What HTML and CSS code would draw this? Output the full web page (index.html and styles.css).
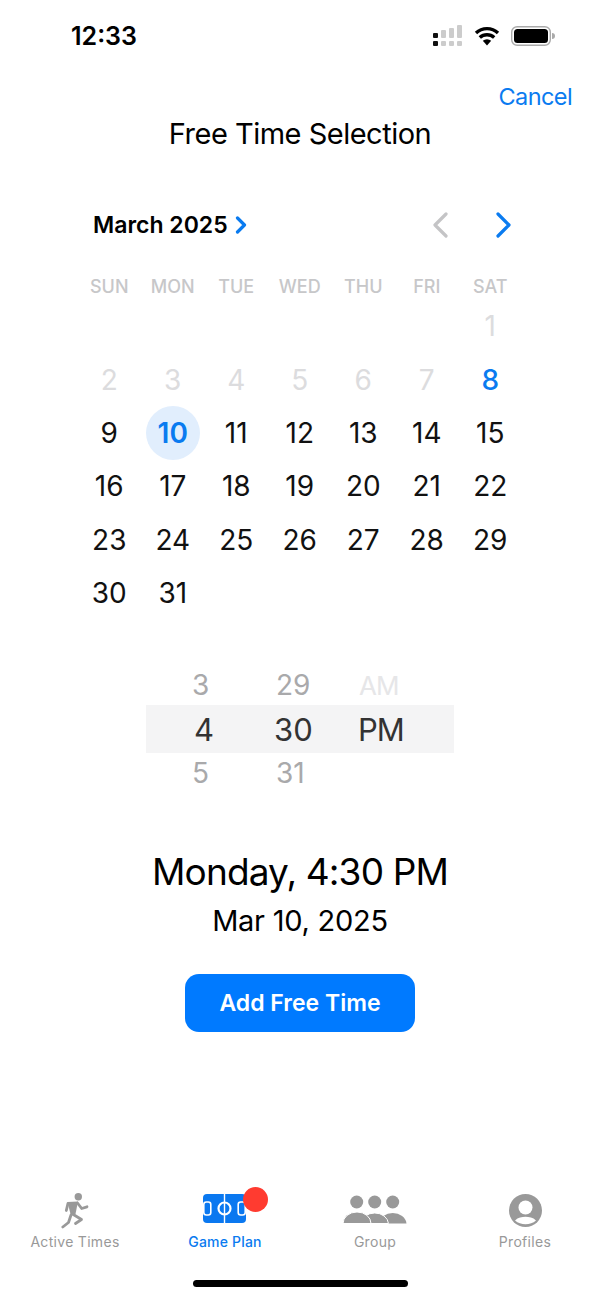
FILE: index.html
```html
<!DOCTYPE html>
<html>
    <head>
        <title>Free Time Selection</title>
        <link rel="stylesheet" href="styles.css">
    </head>
    <body>
        <div class="phone">
            <div class="statusBar">
                <span class="clock">12:33</span>
                <div class="statusIcons">
                    <svg class="signal" width="32" height="22" viewBox="0 0 32 22">
                        <rect x="0" y="8" width="5" height="5" rx="1" fill="#111"/>
                        <rect x="0" y="16" width="5" height="5" rx="1" fill="#111"/>
                        <rect x="8" y="5" width="5" height="8" rx="1" fill="#ccc"/>
                        <rect x="8" y="16" width="5" height="5" rx="1" fill="#ccc"/>
                        <rect x="16" y="3" width="5" height="10" rx="1" fill="#ccc"/>
                        <rect x="16" y="16" width="5" height="5" rx="1" fill="#ccc"/>
                        <rect x="24" y="0" width="5" height="13" rx="1" fill="#ccc"/>
                        <rect x="24" y="16" width="5" height="5" rx="1" fill="#ccc"/>
                    </svg>
                    <svg width="26" height="20" viewBox="0 0 26 20">
                        <path d="M13 19.500 L8.800 14.800 A6.200 6.200 0 0 1 17.200 14.800 Z" fill="#000"/>
                        <path d="M5.800 11.600 A10.600 10.600 0 0 1 20.200 11.600" fill="none" stroke="#000" stroke-width="3.400"/>
                        <path d="M2 7 A16 16 0 0 1 24 7" fill="none" stroke="#000" stroke-width="3.400"/>
                    </svg>
                    <svg width="44" height="20" viewBox="0 0 44 20">
                        <rect x="0.700" y="0.700" width="38.600" height="18.600" rx="5.500" fill="none" stroke="#aaa" stroke-width="1.400"/>
                        <rect x="3" y="3" width="34" height="14" rx="3.500" fill="#000"/>
                        <path d="M41 7 A3 3 0 0 1 41 13 Z" fill="#aaa"/>
                    </svg>
                </div>
            </div>

            <div class="cancelRow"><span class="cancel">Cancel</span></div>
            <h1 class="title">Free Time Selection</h1>

            <div class="calendar">
                <div class="calHeader">
                    <div class="monthLabel">
                        <span>March 2025</span>
                        <svg width="12" height="18" viewBox="0 0 12 18"><path d="M2.500 2 L9.500 9 L2.500 16" class="chev blueChev"/></svg>
                    </div>
                    <div class="monthNav">
                        <svg width="18" height="26" viewBox="0 0 18 26"><path d="M15 2 L4 13 L15 24" class="chev greyChev"/></svg>
                        <svg width="18" height="26" viewBox="0 0 18 26"><path d="M3 2 L14 13 L3 24" class="chev blueChev"/></svg>
                    </div>
                </div>
                <div class="weekdays">
                    <span>SUN</span><span>MON</span><span>TUE</span><span>WED</span><span>THU</span><span>FRI</span><span>SAT</span>
                </div>
                <div class="days">
                    <span></span><span></span><span></span><span></span><span></span><span></span><span class="off">1</span>
                    <span class="off">2</span><span class="off">3</span><span class="off">4</span><span class="off">5</span><span class="off">6</span><span class="off">7</span><span class="today">8</span>
                    <span>9</span><span><b class="selected">10</b></span><span>11</span><span>12</span><span>13</span><span>14</span><span>15</span>
                    <span>16</span><span>17</span><span>18</span><span>19</span><span>20</span><span>21</span><span>22</span>
                    <span>23</span><span>24</span><span>25</span><span>26</span><span>27</span><span>28</span><span>29</span>
                    <span>30</span><span>31</span>
                </div>
            </div>

            <div class="picker">
                <div class="pickRow small">
                    <span class="colHour">3</span><span class="colMin">29</span><span class="colAmpm faint">AM</span>
                </div>
                <div class="pickRow current">
                    <span class="colHour">4</span><span class="colMin">30</span><span class="colAmpm">PM</span>
                </div>
                <div class="pickRow small">
                    <span class="colHour">5</span><span class="colMin">31</span><span class="colAmpm"></span>
                </div>
            </div>

            <div class="summary">
                <div class="sumTime">Monday, 4:30 PM</div>
                <div class="sumDate">Mar 10, 2025</div>
                <button class="addBtn">Add Free Time</button>
            </div>

            <div class="tabBar">
                <div class="tab">
                    <div class="tabIcon">
                        <svg width="28" height="37" viewBox="0 0 28 37">
                            <circle cx="17.300" cy="4.700" r="3.700" fill="#999"/>
                            <path d="M6.500 10 L17 9.500 L14.500 22 L9.500 22 Z" fill="#999"/>
                            <path d="M16.500 11 L20.700 16.500 L26 14.800" class="runner"/>
                            <path d="M7 11.300 L5.300 18.500" class="runner"/>
                            <path d="M11.500 22 L20.500 27.500 L14.500 31.500" class="runner"/>
                            <path d="M10 23 L7.500 30.500 L1.800 35" class="runner"/>
                        </svg>
                    </div>
                    <span>Active Times</span>
                </div>
                <div class="tab active">
                    <div class="tabIcon">
                        <div class="fieldWrap">
                            <svg width="43" height="29" viewBox="0 0 43 29">
                                <rect width="43" height="29" rx="4" fill="#0a78f0"/>
                                <path d="M21.500 0 V29" stroke="#fff" stroke-width="1.400"/>
                                <circle cx="21.500" cy="14.500" r="6" fill="none" stroke="#fff" stroke-width="2.200"/>
                                <rect x="0.800" y="8" width="7" height="13" rx="2.500" fill="none" stroke="#fff" stroke-width="1.600"/>
                                <rect x="35.200" y="8" width="7" height="13" rx="2.500" fill="none" stroke="#fff" stroke-width="1.600"/>
                            </svg>
                            <i class="badge"></i>
                        </div>
                    </div>
                    <span>Game Plan</span>
                </div>
                <div class="tab">
                    <div class="tabIcon">
                        <svg width="64" height="30" viewBox="0 0 64 30">
                            <circle cx="13.700" cy="7" r="6.500" fill="#999"/>
                            <circle cx="31.700" cy="7" r="6.500" fill="#999"/>
                            <circle cx="49.700" cy="7" r="6.500" fill="#999"/>
                            <path d="M36 28.500 A13.800 11.500 0 0 1 63.500 28.500 Z" fill="#999"/>
                            <path d="M18 28.500 A13.800 11.500 0 0 1 45.500 28.500 Z" fill="#999" stroke="#fff" stroke-width="1"/>
                            <path d="M0 28.500 A14 11.500 0 0 1 28 28.500 Z" fill="#999" stroke="#fff" stroke-width="1"/>
                        </svg>
                    </div>
                    <span>Group</span>
                </div>
                <div class="tab">
                    <div class="tabIcon">
                        <svg width="33" height="33" viewBox="0 0 33 33">
                            <circle cx="16.500" cy="16.500" r="16.500" fill="#999"/>
                            <circle cx="16.500" cy="13.500" r="7" fill="#fff"/>
                            <path d="M6 26.500 C9 23.500 13 22.800 16.500 22.800 C20 22.800 24 23.500 27 26.500 C24 29 20.500 30.200 16.500 30.200 C12.500 30.200 9 29 6 26.500 Z" fill="#fff"/>
                        </svg>
                    </div>
                    <span>Profiles</span>
                </div>
            </div>
            <div class="homeBar"></div>
        </div>
    </body>
</html>
```
FILE: styles.css
```css
*{
    box-sizing: border-box;
}
body{
    margin: 0;
    background: #fff;
    font-family: Inter, "Liberation Sans", sans-serif;
    color: #000;
}
.phone{
    width: 600px;
    height: 1300px;
    display: flex;
    flex-direction: column;
}
.statusBar{
    height: 72px;
    padding: 20px 45px 0 71px;
    display: flex;
    justify-content: space-between;
    align-items: flex-start;
}
.clock{
    font-size: 25px;
    font-weight: 600;
    line-height: 32px;
}
.statusIcons{
    display: flex;
    align-items: center;
    gap: 11px;
    padding-top: 5px;
}
.signal{
    margin-right: -2px;
}
.cancelRow{
    display: flex;
    justify-content: flex-end;
    padding: 1px 28px 0 0;
}
.cancel{
    color: #0a7bf0;
    font-size: 23.5px;
    letter-spacing: -0.6px;
    line-height: 48px;
}
.title{
    margin: -11px 0 0;
    font-size: 29px;
    font-weight: 400;
    letter-spacing: -0.5px;
    line-height: 48px;
    text-align: center;
}
.calendar{
    margin-top: 43px;
    padding: 0 77px 0 77.5px;
}
.calHeader{
    height: 48px;
    padding: 0 10px 0 15.5px;
    display: flex;
    justify-content: space-between;
    align-items: center;
}
.monthLabel{
    display: flex;
    align-items: center;
    gap: 7px;
    font-size: 23px;
    font-weight: 600;
}
.monthNav{
    display: flex;
    align-items: center;
    gap: 46px;
}
.chev{
    fill: none;
    stroke-width: 3.2;
    stroke-linecap: round;
    stroke-linejoin: round;
}
.blueChev{
    stroke: #0a7bf0;
}
.greyChev{
    stroke: #c4c4c6;
}
.weekdays{
    margin-top: 26px;
    display: grid;
    grid-template-columns: repeat(7, 63.5px);
    text-align: center;
    font-size: 18px;
    font-weight: 500;
    line-height: 24px;
    color: #c7c7c9;
}
.days{
    margin-top: 0.5px;
    display: grid;
    grid-template-columns: repeat(7, 63.5px);
    grid-auto-rows: 53.4px;
    font-size: 28px;
}
.days span{
    display: flex;
    align-items: center;
    justify-content: center;
    color: #111;
}
.days .off{
    color: #dcdcde;
}
.days .today{
    color: #0a7bf0;
    font-weight: 500;
}
.selected{
    width: 54px;
    height: 54px;
    border-radius: 50%;
    background: #e1eefd;
    color: #0a7bf0;
    font-weight: 600;
    display: flex;
    align-items: center;
    justify-content: center;
}
.picker{
    margin-top: 45.5px;
    margin-left: 146px;
    width: 308px;
}
.pickRow{
    display: flex;
    align-items: center;
}
.pickRow.small{
    height: 40px;
    padding-left: 46px;
    font-size: 28px;
    color: #a9a9ab;
}
.pickRow.current{
    height: 48px;
    padding-left: 48px;
    background: #f4f4f5;
    font-size: 31px;
    color: #333;
}
.colHour{
    flex: none;
    width: 80px;
}
.colMin{
    flex: none;
    width: 84px;
}
.small .colHour{
    width: 84px;
}
.small .colMin{
    width: 83px;
}
.current .colAmpm{
    letter-spacing: -1px;
}
.faint{
    color: #e6e6e8;
    font-size: 26px;
    letter-spacing: -1px;
}
.summary{
    margin-top: 54px;
    display: flex;
    flex-direction: column;
    align-items: center;
}
.sumTime{
    font-size: 37px;
    letter-spacing: -0.85px;
    line-height: 50px;
}
.sumDate{
    font-size: 29px;
    letter-spacing: -0.25px;
    line-height: 48px;
}
.addBtn{
    margin-top: 29px;
    width: 230px;
    height: 58px;
    border: 0;
    border-radius: 14px;
    background: #007aff;
    color: #fff;
    font-family: inherit;
    font-size: 23px;
    font-weight: 600;
}
.tabBar{
    margin-top: auto;
    display: grid;
    grid-template-columns: repeat(4, 150px);
}
.tab{
    display: flex;
    flex-direction: column;
    align-items: center;
    justify-content: flex-end;
    gap: 3px;
    font-size: 14px;
    font-weight: 400;
    line-height: 20px;
    color: #999;
    letter-spacing: 0.3px;
}
.tab.active{
    color: #0a7bf0;
    font-weight: 500;
    letter-spacing: 0.2px;
}
.tabIcon{
    height: 38px;
    display: flex;
    align-items: center;
    justify-content: center;
}
.fieldWrap{
    position: relative;
    width: 43px;
    height: 29px;
    margin-bottom: 3px;
    margin-left: -1px;
}
.fieldWrap svg{
    display: block;
}
.badge{
    position: absolute;
    top: -7px;
    left: 40px;
    width: 25px;
    height: 25px;
    border-radius: 50%;
    background: #ff3b30;
}
.runner{
    fill: none;
    stroke: #999;
    stroke-width: 2.8;
    stroke-linecap: round;
    stroke-linejoin: round;
}
.homeBar{
    margin: 28px 0 13px 193px;
    width: 215px;
    height: 7px;
    border-radius: 4px;
    background: #000;
}
```
